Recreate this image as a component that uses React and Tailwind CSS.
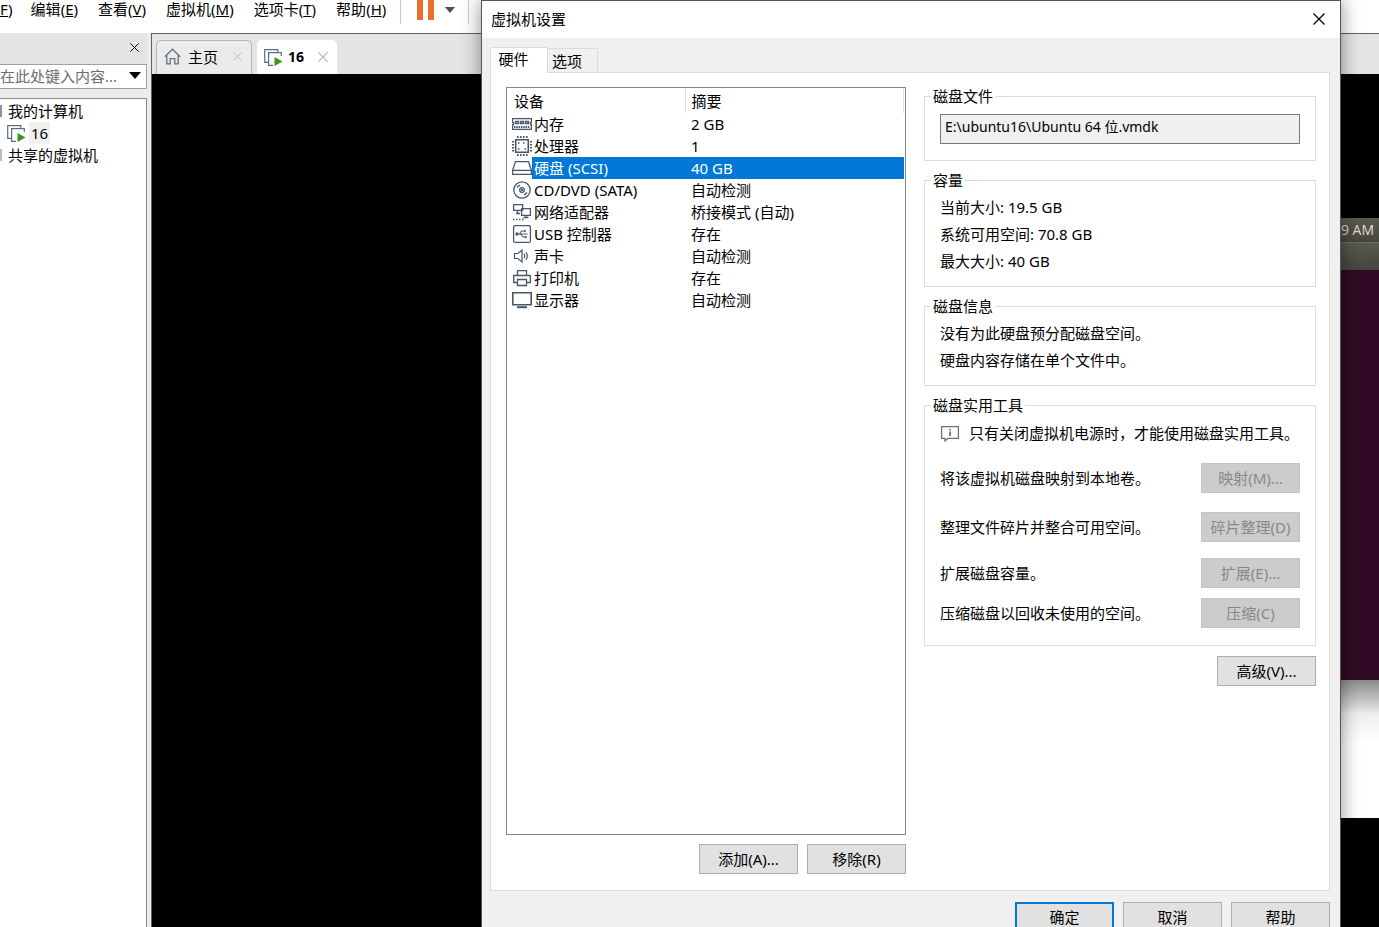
import React, { useState } from 'react';
import clsx from 'clsx';

const MemoryIcon = () => (
  <svg width="20" height="20" viewBox="0 0 20 20" fill="none" stroke="#46586a">
    <path d="M.6 4.6h18.8v4h-1v2h1v4.8H.6v-4.8h1v-2h-1z" strokeWidth="1.2" />
    <path d="M3.5 7.5h3v2h-3zM8.5 7.5h3v2h-3zM13.5 7.5h3v2h-3z" strokeWidth="1.3" />
    <path d="M2 13h16" strokeDasharray="1.5 .8" strokeWidth="2" />
  </svg>
);

const CpuIcon = () => (
  <svg width="20" height="20" viewBox="0 0 20 20" fill="none" stroke="#46586a">
    <path d="M3.7 3.7h12.6v12.6H3.7z" strokeWidth="1.6" />
    <path d="M5 1h11M5 19h11" strokeWidth="2" strokeDasharray="1.6 1.4" />
    <path d="M1 5v11M19 5v11" strokeWidth="2" strokeDasharray="1.6 1.4" />
    <path d="M6 7h1.5M11 7h1.5M12.5 13H14M6 13h1.5" strokeWidth="1.4" />
  </svg>
);

const DiskIcon = () => (
  <svg width="20" height="20" viewBox="0 0 20 20" fill="none" stroke="#46586a" strokeWidth="1.3">
    <path d="M3.5 3.6h13l2.9 8.6v4.2H.6v-4.2z" />
    <path d="M.6 12.4h18.8" />
  </svg>
);

const DiscIcon = () => (
  <svg width="20" height="20" viewBox="0 0 20 20" fill="none" stroke="#46586a" strokeWidth="1.3">
    <circle cx="10" cy="10" r="8.2" />
    <circle cx="10" cy="10" r="2.3" />
    <circle cx="10" cy="10" r=".5" />
    <path d="M5.2 7.6A5.4 5.4 0 0 1 8 5.1M14.8 12.4a5.4 5.4 0 0 1-2.8 2.5" />
  </svg>
);

const NetworkIcon = () => (
  <svg width="20" height="20" viewBox="0 0 20 20" fill="none" stroke="#46586a" strokeWidth="1.3">
    <path d="M1.6 2.6h9v5.8h-9zM9.6 6.6h8.8v6.8H9.6z" fill="#fff" />
    <path d="M4 11.5h4M5.5 8.5v3M14 13.5v2M11.5 15.5h5" />
    <path d="M1 17.5h12" strokeDasharray="1.5 1.5" />
  </svg>
);

const UsbIcon = () => (
  <svg width="20" height="20" viewBox="0 0 20 20" fill="none" stroke="#46586a" strokeWidth="1.3">
    <rect x="1.6" y="1.6" width="16.8" height="16.8" rx="1.5" />
    <path d="M5 10h10.5M7.5 10l2-3h2M8.5 10l2.5 3h2" strokeWidth="1.1" />
    <circle cx="5" cy="10" r="1" fill="#46586a" />
    <path d="M12 6.3h1.5v1.5H12zM13 12.3h1.5v1.5H13z" fill="#46586a" strokeWidth=".5" />
  </svg>
);

const SoundIcon = () => (
  <svg width="20" height="20" viewBox="0 0 20 20" fill="none" stroke="#46586a" strokeWidth="1.2">
    <path d="M2.5 7.5H6l4-3.5v12l-4-3.5H2.5z" />
    <path d="M12 7.8q1.4 2.2 0 4.4M14 6.3q2.6 3.7 0 7.4" />
  </svg>
);

const PrinterIcon = () => (
  <svg width="20" height="20" viewBox="0 0 20 20" fill="none" stroke="#46586a" strokeWidth="1.3">
    <path d="M5.5 7.5V2.6h9v4.9M5.5 14.5H1.7v-7h16.6v7h-3.8" />
    <path d="M5.5 11.5h9v6h-9z" />
  </svg>
);

const DisplayIcon = () => (
  <svg width="20" height="20" viewBox="0 0 20 20" fill="none" stroke="#46586a">
    <path d="M.8 2.8h18.4v12H.8z" strokeWidth="1.6" />
    <path d="M5 17.2h10" strokeWidth="2" />
  </svg>
);

const MachineIcon = () => (
  <svg width="19" height="19" viewBox="0 0 19 19" fill="none" stroke="#5c6f80" strokeWidth="1.2">
    <path d="M4 14.4H.7V1.6h13.2V4" />
    <path d="M17.3 8V4.6H4.6v12.8H9" />
    <path d="M10.5 9v9l8-4.5z" fill="#3f9416" stroke="none" />
  </svg>
);

const HomeIcon = () => (
  <svg width="17" height="17" viewBox="0 0 17 17" fill="none" stroke="#65737e" strokeWidth="1.3">
    <path d="M.8 8.8 8.5 1.2l7.7 7.6" />
    <path d="M2.8 7.5v8.4h3.4v-5.2h4.6v5.2h3.4V7.5" />
  </svg>
);

const InfoIcon = () => (
  <svg width="20" height="20" viewBox="0 0 20 20" fill="none" stroke="#66727c" strokeWidth="1.3">
    <path d="M1.6 2.6h16.8v11.8H8l-3 2.4v-2.4H1.6z" />
    <path d="M10 5v1.5M10 7.5V12" stroke="#3a4650" />
  </svg>
);

const CrossIcon = ({ size }) => (
  <svg width={size} height={size} viewBox="0 0 12 12" fill="none" stroke="currentColor" strokeWidth="1.3">
    <path d="M.5.5l11 11M11.5.5l-11 11" />
  </svg>
);

const menus = [
  { label: '编辑', key: 'E' },
  { label: '查看', key: 'V' },
  { label: '虚拟机', key: 'M' },
  { label: '选项卡', key: 'T' },
  { label: '帮助', key: 'H' },
];

const devices = [
  { id: 'memory', icon: MemoryIcon, name: '内存', summary: '2 GB' },
  { id: 'cpu', icon: CpuIcon, name: '处理器', summary: '1' },
  { id: 'disk', icon: DiskIcon, name: '硬盘 (SCSI)', summary: '40 GB' },
  { id: 'cd', icon: DiscIcon, name: 'CD/DVD (SATA)', summary: '自动检测' },
  { id: 'network', icon: NetworkIcon, name: '网络适配器', summary: '桥接模式 (自动)' },
  { id: 'usb', icon: UsbIcon, name: 'USB 控制器', summary: '存在' },
  { id: 'sound', icon: SoundIcon, name: '声卡', summary: '自动检测' },
  { id: 'printer', icon: PrinterIcon, name: '打印机', summary: '存在' },
  { id: 'display', icon: DisplayIcon, name: '显示器', summary: '自动检测' },
];

const Button = ({ children, primary, disabled }) => (
  <button
    disabled={disabled}
    className={clsx(
      'h-[30px] w-[99px] shrink-0 whitespace-nowrap',
      disabled && 'border border-[#c4c4c4] bg-[#cccccc] text-[#888888]',
      primary && 'border-2 border-[#0078d7] bg-[#e1e1e1]',
      !disabled && !primary && 'border border-[#adadad] bg-[#e1e1e1]'
    )}
  >
    {children}
  </button>
);

const Group = ({ title, className, children }) => (
  <fieldset className="min-w-0 border border-[#dcdcdc]">
    <legend className="ml-[6px] px-[2px] leading-5">{title}</legend>
    <div className={clsx('px-[15px]', className)}>{children}</div>
  </fieldset>
);

const MenuBar = () => (
  <nav className="flex h-[33px] shrink-0 items-start bg-white">
    <button className="leading-[18px]"><u>F</u>)</button>
    <div className="ml-[18px] flex gap-5">
      {menus.map((menu) => (
        <button key={menu.key} className="leading-[18px] whitespace-nowrap">
          {menu.label}(<u>{menu.key}</u>)
        </button>
      ))}
    </div>
    <div className="ml-[14px] flex h-6 items-start border-x border-[#c9c9c9] pr-[13px] pl-4">
      <button aria-label="暂停" className="flex h-5 gap-[5px]">
        <span className="w-[6px] bg-[#e8702a]"></span>
        <span className="w-[6px] bg-[#e8702a]"></span>
      </button>
      <svg className="mt-[7px] ml-[11px]" width="10" height="6" viewBox="0 0 10 6">
        <path d="M0 0h10L5 6z" fill="#4d4d4d" />
      </svg>
    </div>
  </nav>
);

const Sidebar = () => (
  <aside className="flex w-[151px] shrink-0 flex-col bg-[#ececec] pr-1">
    <div className="flex h-[31px] items-center justify-end bg-[#e4e4e4] pr-[8px] pb-[2px]">
      <button aria-label="关闭" className="text-black"><CrossIcon size={9} /></button>
    </div>
    <div className="flex h-[25px] shrink-0 items-center border-y border-r border-[#a0a0a0] bg-white pb-[2px]">
      <input
        aria-label="搜索"
        placeholder="在此处键入内容..."
        className="w-[129px] min-w-0 placeholder:text-[#6d6d6d]"
      />
      <svg width="12" height="7" viewBox="0 0 12 7">
        <path d="M0 0h12L6 7z" fill="#000" />
      </svg>
    </div>
    <ul className="mt-[9px] flex-1 border-t border-r border-[#8c8c8c] bg-white pt-px leading-[22px]">
      <li className="flex items-center">
        <span className="mr-[6px] h-3 w-[2px] bg-[#8496a5]"></span>我的计算机
      </li>
      <li className="flex items-center gap-[3px] pl-[7px]">
        <MachineIcon />
        <span className="bg-[#f0f0f0] px-[2px]">16</span>
      </li>
      <li className="flex items-center">
        <span className="mr-[6px] h-3 w-[2px] bg-[#b4bcc6]"></span>共享的虚拟机
      </li>
    </ul>
  </aside>
);

const Workspace = () => (
  <main className="flex min-w-0 flex-1 flex-col border-t border-l border-[#5f5f66]">
    <div className="flex h-10 shrink-0 items-end gap-[5px] bg-[#e4e4e4] pl-[4px]">
      <div className="flex h-[34px] w-[96px] items-center rounded-t-[5px] border border-b-0 border-[#b4b4b4] bg-[#ebebeb] pb-[2px] pl-[7px]">
        <HomeIcon />
        <a href="#home" className="ml-[7px]">主页</a>
        <button aria-label="关闭主页" className="ml-auto pr-[9px] text-[#b9b9b9]"><CrossIcon size={9} /></button>
      </div>
      <div className="flex h-[34px] w-[80px] items-center rounded-t-[5px] bg-white pl-[7px]">
        <MachineIcon />
        <a href="#vm" className="ml-[5px] text-sm font-bold">16</a>
        <button aria-label="关闭 16" className="ml-auto pr-[9px] text-[#b0b0b0]"><CrossIcon size={10} /></button>
      </div>
    </div>
    {/* Guest screen */}
    <div className="flex-1 bg-black pt-[144px] pl-[400px]">
      <div className="flex h-6 items-center justify-end bg-linear-to-b from-[#5c5b52] to-[#46453e] pr-[5px] font-['Open_Sans',sans-serif] text-sm text-[#dfdbd2]">
        9 AM
      </div>
      <div className="h-7 border-t border-[#6b6a60] bg-linear-to-b from-[#5a5950] to-[#45443d]"></div>
      <div className="h-[410px] bg-[#300a24]"></div>
      <div className="h-[138px] bg-linear-to-b from-[#8c8c8c] via-[#eeeeee] via-25% to-white to-45%"></div>
    </div>
  </main>
);

const DeviceList = ({ selected, onSelect }) => (
  <div className="flex w-[400px] shrink-0 flex-col">
    <div className="h-[748px] border border-[#828790] bg-white pr-px">
      <table className="w-full table-fixed border-collapse text-left">
        <colgroup>
          <col className="w-[25px]" />
          <col className="w-[153px]" />
          <col />
        </colgroup>
        <thead>
          <tr className="h-[25px]">
            <th colSpan={2} className="border-r border-[#e0e0e0] p-0 pl-[7px] font-normal">设备</th>
            <th className="border-r border-[#e0e0e0] p-0 pl-[6px] font-normal">摘要</th>
          </tr>
        </thead>
        <tbody>
          {devices.map((device) => {
            const Icon = device.icon;
            const isSelected = device.id === selected;

            return (
              <tr key={device.id} className="h-[22px] leading-[22px]" onClick={() => onSelect(device.id)}>
                <td className="p-0 pl-[5px]"><Icon /></td>
                <td className={clsx('p-0 pl-[2px] whitespace-nowrap', isSelected && 'bg-[#0078d7] text-white')}>
                  {device.name}
                </td>
                <td className={clsx('p-0 pl-[6px]', isSelected && 'bg-[#0078d7] text-white')}>
                  {device.summary}
                </td>
              </tr>
            );
          })}
        </tbody>
      </table>
    </div>
    <div className="mt-[9px] flex justify-end gap-[9px]">
      <Button>添加(A)...</Button>
      <Button>移除(R)</Button>
    </div>
  </div>
);

const DiskSettings = () => (
  <div className="-mt-px flex min-w-0 flex-1 flex-col gap-[9px]">
    <Group title="磁盘文件" className="pt-2 pb-4">
      <input
        aria-label="磁盘文件"
        readOnly
        value="E:\ubuntu16\Ubuntu 64 位.vmdk"
        className="block h-[30px] w-full border border-[#7a7a7a] bg-[#f0f0f0] px-[4px] pb-[6px] text-sm"
      />
    </Group>
    <Group title="容量" className="pt-1 pb-[11px] leading-[27px]">
      <p>当前大小: 19.5 GB</p>
      <p>系统可用空间: 70.8 GB</p>
      <p>最大大小: 40 GB</p>
    </Group>
    <Group title="磁盘信息" className="pt-1 pb-[11px] leading-[27px]">
      <p>没有为此硬盘预分配磁盘空间。</p>
      <p>硬盘内容存储在单个文件中。</p>
    </Group>
    <Group title="磁盘实用工具" className="pt-[5px] pb-[17px]">
      <div className="flex items-center gap-[9px] leading-[27px] whitespace-nowrap">
        <InfoIcon />
        只有关闭虚拟机电源时，才能使用磁盘实用工具。
      </div>
      <div className="mt-4 flex items-center justify-between">
        将该虚拟机磁盘映射到本地卷。
        <Button disabled>映射(M)...</Button>
      </div>
      <div className="mt-[19px] flex items-center justify-between">
        整理文件碎片并整合可用空间。
        <Button disabled>碎片整理(D)</Button>
      </div>
      <div className="mt-4 flex items-center justify-between">
        扩展磁盘容量。
        <Button disabled>扩展(E)...</Button>
      </div>
      <div className="mt-[10px] flex items-center justify-between">
        压缩磁盘以回收未使用的空间。
        <Button disabled>压缩(C)</Button>
      </div>
    </Group>
    <div className="flex justify-end pt-px">
      <Button>高级(V)...</Button>
    </div>
  </div>
);

const SettingsDialog = () => {
  const [selected, setSelected] = useState('disk');

  return (
    <div
      role="dialog"
      aria-label="虚拟机设置"
      className="absolute top-0 right-[38px] left-[481px] border border-[#55555a] bg-[#f0f0f0] shadow-[0_0_18px_rgba(0,0,0,0.45)]"
    >
      <div className="flex h-[37px] items-center justify-between bg-white pr-[15px] pb-px pl-[9px]">
        <h1>虚拟机设置</h1>
        <button aria-label="关闭"><CrossIcon size={12} /></button>
      </div>
      <div className="pt-[9px] pr-[10px] pl-2">
        <div className="flex items-end">
          <button className="-mb-px h-[26px] w-[58px] border border-b-0 border-[#dcdcdc] bg-white pr-[11px] pb-[4px]">
            硬件
          </button>
          <button className="h-6 w-[50px] border border-b-0 border-l-0 border-[#dcdcdc] pr-[11px]">选项</button>
        </div>
        <div className="flex min-h-[819px] gap-[18px] border border-[#dcdcdc] bg-white pt-[14px] pr-[13px] pl-[15px]">
          <DeviceList selected={selected} onSelect={setSelected} />
          <DiskSettings />
        </div>
      </div>
      <div className="flex justify-end gap-[9px] pt-[11px] pr-[10px] pb-3">
        <Button primary>确定</Button>
        <Button>取消</Button>
        <Button>帮助</Button>
      </div>
    </div>
  );
};

const App = () => (
  <div className="relative flex h-screen flex-col overflow-hidden bg-[#f0f0f0] font-['Noto_Sans','Noto_Sans_CJK_SC',sans-serif] text-[15px] leading-5 text-black">
    <MenuBar />
    <div className="flex min-h-0 flex-1">
      <Sidebar />
      <Workspace />
    </div>
    <SettingsDialog />
  </div>
);

export default App;
